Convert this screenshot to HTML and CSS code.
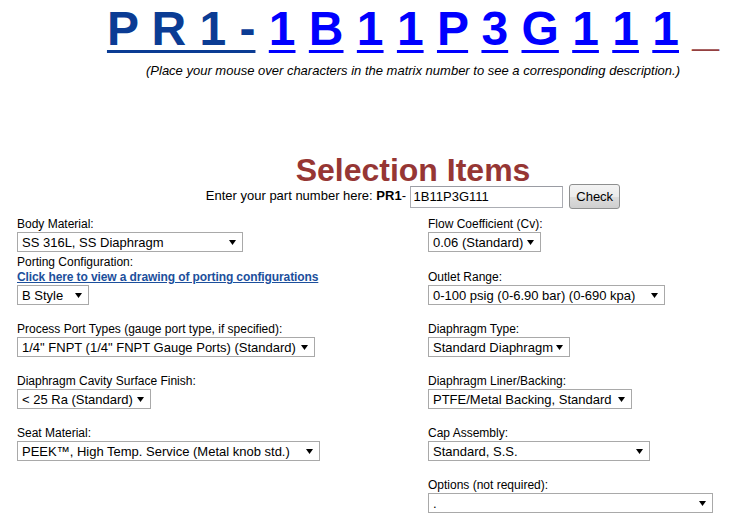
FILE: index.html
```html
<!DOCTYPE html>
<html>
<head>
<meta charset="utf-8">
<title>Selection Items</title>
<link rel="stylesheet" href="styles.css">
</head>
<body>
<div class="header">
  <div class="matrix"><a class="prefix">P R 1 -</a> <a class="ch">1</a> <a class="ch">B</a> <a class="ch">1</a> <a class="ch">1</a> <a class="ch">P</a> <a class="ch">3</a> <a class="ch">G</a> <a class="ch">1</a> <a class="ch">1</a> <a class="ch">1</a> <span class="tail">_</span></div>
  <div class="hint">(Place your mouse over characters in the matrix number to see a corresponding description.)</div>
  <h1 class="title">Selection Items</h1>
  <div class="partline">Enter your part number here: <b>PR1</b>- <input class="partinput" type="text" value="1B11P3G111"> <button class="check">Check</button></div>
</div>

<div class="form">
  <div class="col">
    <div class="field tight">
      <div class="lbl">Body Material:</div>
      <span class="sel"><select class="w-body"><option>SS 316L, SS Diaphragm</option></select></span>
    </div>
    <div class="field">
      <div class="lbl">Porting Configuration:</div>
      <a class="drawlink">Click here to view a drawing of porting configurations</a>
      <span class="sel nomt"><select class="w-bstyle"><option>B Style</option></select></span>
    </div>
    <div class="field">
      <div class="lbl">Process Port Types (gauge port type, if specified):</div>
      <span class="sel"><select class="w-process"><option>1/4" FNPT (1/4" FNPT Gauge Ports) (Standard)</option></select></span>
    </div>
    <div class="field">
      <div class="lbl">Diaphragm Cavity Surface Finish:</div>
      <span class="sel"><select class="w-cavity"><option>&lt; 25 Ra (Standard)</option></select></span>
    </div>
    <div class="field">
      <div class="lbl">Seat Material:</div>
      <span class="sel"><select class="w-seat"><option>PEEK™, High Temp. Service (Metal knob std.)</option></select></span>
    </div>
  </div>
  <div class="col">
    <div class="field first">
      <div class="lbl">Flow Coefficient (Cv):</div>
      <span class="sel"><select class="w-flow"><option>0.06 (Standard)</option></select></span>
    </div>
    <div class="field">
      <div class="lbl">Outlet Range:</div>
      <span class="sel"><select class="w-outlet"><option>0-100 psig (0-6.90 bar) (0-690 kpa)</option></select></span>
    </div>
    <div class="field">
      <div class="lbl">Diaphragm Type:</div>
      <span class="sel"><select class="w-dtype"><option>Standard Diaphragm</option></select></span>
    </div>
    <div class="field">
      <div class="lbl">Diaphragm Liner/Backing:</div>
      <span class="sel"><select class="w-liner"><option>PTFE/Metal Backing, Standard</option></select></span>
    </div>
    <div class="field">
      <div class="lbl">Cap Assembly:</div>
      <span class="sel"><select class="w-cap"><option>Standard, S.S.</option></select></span>
    </div>
    <div class="field">
      <div class="lbl">Options (not required):</div>
      <span class="sel"><select class="w-options"><option>.</option></select></span>
    </div>
  </div>
</div>
</body>
</html>
```
FILE: styles.css
```css
html, body {
  margin: 0;
  padding: 0;
  background: #ffffff;
  color: #000000;
  font-family: "Liberation Sans", Arial, sans-serif;
}

.header {
  padding-left: 92px;
  text-align: center;
}

.matrix {
  font-weight: bold;
  font-size: 48px;
  line-height: 56px;
  padding-top: 1px;
  white-space: nowrap;
}

.matrix a {
  text-decoration: underline;
  text-decoration-thickness: 3px;
  text-underline-offset: 5px;
}

.prefix {
  color: #0b3c94;
}

.ch {
  color: #0000ff;
}

.tail {
  color: #944040;
}

.hint {
  font-style: italic;
  font-size: 13px;
  line-height: 16px;
  margin-top: 6px;
}

.title {
  margin: 77px 0 0 0;
  font-size: 32px;
  line-height: 28px;
  font-weight: bold;
  color: #963634;
}

.partline {
  font-size: 13px;
  line-height: 24px;
  height: 24px;
  white-space: nowrap;
}

.partinput {
  box-sizing: border-box;
  width: 153px;
  height: 22px;
  margin: 0;
  padding: 0 3px;
  border: 1px solid #abadb3;
  border-top-color: #9a9ca3;
  font-family: "Liberation Sans", Arial, sans-serif;
  font-size: 13px;
  vertical-align: middle;
}

.check {
  box-sizing: border-box;
  width: 51px;
  height: 25px;
  margin: 0 0 0 3px;
  padding: 0;
  border: 1px solid #8e8f8f;
  border-radius: 3px;
  background: linear-gradient(#f3f3f3 0%, #ebebeb 50%, #dddddd 51%, #cfcfcf 100%);
  font-family: "Liberation Sans", Arial, sans-serif;
  font-size: 13px;
  color: #000;
  vertical-align: middle;
}

.form {
  display: grid;
  grid-template-columns: 411px 1fr;
  padding-left: 17px;
  margin-top: 9px;
}

.col {
  display: flex;
  flex-direction: column;
  align-items: flex-start;
}

.field {
  display: flex;
  flex-direction: column;
  align-items: flex-start;
  margin-bottom: 14px;
}

.field.tight {
  margin-bottom: 0;
}

.field.first {
  margin-bottom: 15px;
}

.lbl {
  font-size: 12px;
  line-height: 14px;
  white-space: nowrap;
}

.drawlink {
  font-size: 12px;
  line-height: 16px;
  font-weight: bold;
  letter-spacing: -0.1px;
  color: #1c4f9c;
  text-decoration: underline;
  white-space: nowrap;
}

.sel {
  position: relative;
  display: block;
  margin: 1px 0 3px 0;
}

.sel.nomt {
  margin-top: 0;
}

.sel::after {
  content: "";
  position: absolute;
  right: 7px;
  top: 8px;
  width: 7px;
  height: 5px;
  background: #000;
  clip-path: polygon(0 0, 100% 0, 50% 100%);
  pointer-events: none;
}

.sel select {
  display: block;
  box-sizing: border-box;
  appearance: none;
  -webkit-appearance: none;
  height: 20px;
  margin: 0;
  padding: 0 0 0 4px;
  border: 1px solid #a9a9a9;
  border-radius: 0;
  background: #ffffff;
  color: #000;
  font-family: "Liberation Sans", Arial, sans-serif;
  font-size: 13px;
}

.w-body { width: 226px; }
.w-bstyle { width: 72px; }
.w-process { width: 298px; }
.w-cavity { width: 134px; }
.w-seat { width: 303px; }
.w-flow { width: 113px; }
.w-outlet { width: 237px; }
.w-dtype { width: 142px; }
.w-liner { width: 204px; }
.w-cap { width: 222px; }
.w-options { width: 285px; }
```
